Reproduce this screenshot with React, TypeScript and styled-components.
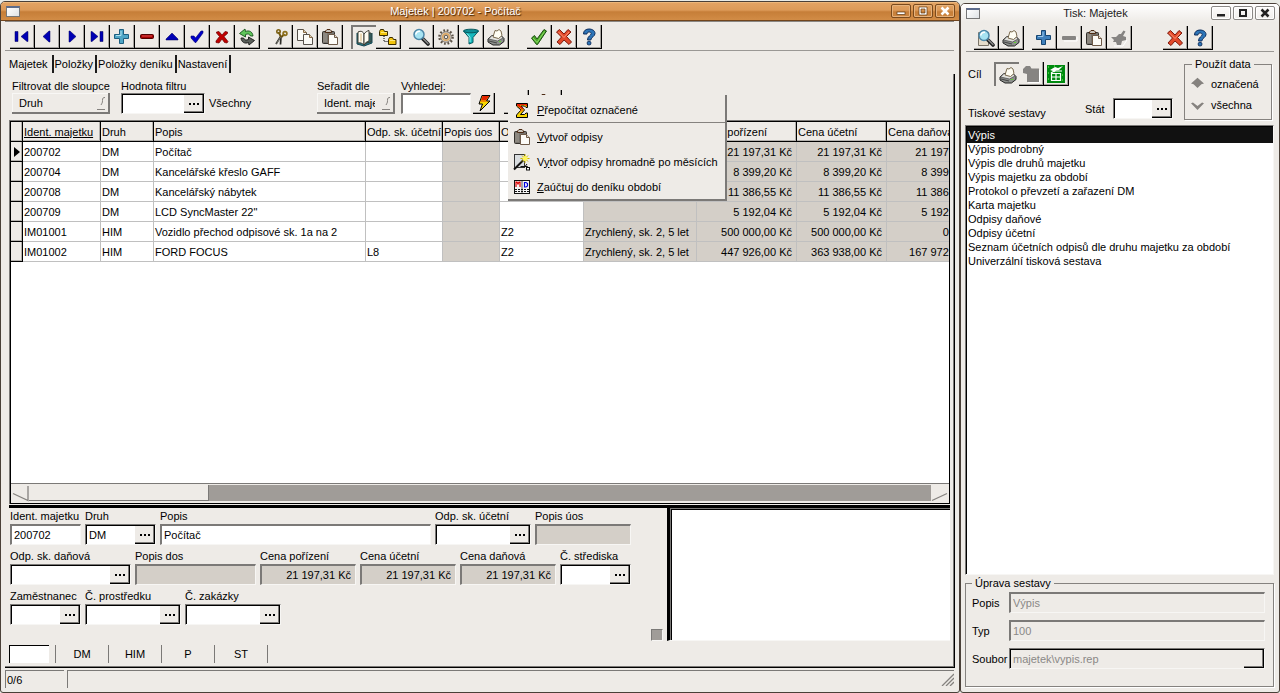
import React, { useState } from "react";
import styled, { createGlobalStyle, css } from "styled-components";

const face = "#eeebe7";
const shade = "#7b7977";
const readonlyBg = "#d4cfc8";
const gridLine = "#c0c0c0";

const GlobalStyle = createGlobalStyle`
  *, *::before, *::after { box-sizing: border-box; }
  body { margin: 0; background: #e9ebe6; }
  body, button, input, select, table {
    font-family: "Liberation Sans", Arial, sans-serif;
    font-size: 11px;
    line-height: 14px;
    color: #000;
  }
  button, input, select { margin: 0; padding: 0; border: 0; border-radius: 0; background: none; outline: none; }
  button { cursor: default; }
`;

/* ---------- icons ---------- */

type IconName =
  | "first" | "prev" | "next" | "last" | "plus" | "minus" | "up" | "check" | "cross" | "refresh"
  | "cut" | "copy" | "paste" | "book" | "tree" | "find" | "gear" | "filter" | "print" | "ok" | "cancel"
  | "help" | "bolt" | "sigma" | "wand" | "journal" | "preview" | "plusBlue" | "minusGrey" | "handGrey"
  | "folderGrey" | "sheet" | "doc";

const printer = (
  <>
    <path d="M1 11 5 7.500h9l3 3v3l-4.500 3.500H6L1 14z" fill="#8c8f8c" stroke="#222" />
    <path d="M1.500 11l9 2 5.500-3-2-2.500H5z" fill="#e2e2de" stroke="#444" strokeWidth=".7" />
    <path d="M6 9 8 2.500l2 .500 2-1.500 2 1.500 1 4.500-3.500 3z" fill="#fffef4" stroke="#6b5a3c" strokeWidth=".9" />
    <path d="M2 13l8 2" stroke="#444" />
    <rect x="12" y="13" width="2" height="1" fill="#5bd82a" />
  </>
);

const clipboard = (
  <>
    <rect x="1.500" y="3.500" width="12" height="12" rx="1" fill="#77736d" stroke="#33302c" />
    <path d="M3 5v9M5 5v9" stroke="#a39e95" />
    <path d="M4.500 4.500V3L6 1.500h3L10.500 3v1.500z" fill="#c9c5bd" stroke="#4d2b14" />
    <path d="M7.500 6.500h6l3 3v7h-9z" fill="#fdfcf8" stroke="#6e5a48" />
    <path d="M13.500 6.500v3h3" fill="#e8dccb" stroke="#6e5a48" />
  </>
);

const lens = (
  <>
    <path d="M10.500 10.500 16 16" stroke="#222" strokeWidth="3.600" strokeLinecap="round" />
    <path d="M11.500 11 16 15.500" stroke="#8d8d8d" strokeWidth="1.300" strokeLinecap="round" />
    <circle cx="7" cy="6.500" r="5" fill="#a7e3f2" stroke="#4c87a8" strokeWidth="1.500" />
    <path d="M3.800 6.500A3.500 3.500 0 0 1 8 3.300" fill="none" stroke="#fff" strokeWidth="1.600" />
  </>
);

const icons: Record<IconName, React.ReactNode> = {
  first: <path d="M2 3.500h3v10H2zM15 3.500v10h-1l-6-5 6-5z" fill="#0000b4" stroke="#000058" strokeWidth=".5" />,
  prev: <path d="M12 3v11h-1L5 8.500 11 3z" fill="#0000b4" stroke="#000058" strokeWidth=".5" />,
  next: <path d="M6 3v11h1l6-5.500L7 3z" fill="#0000b4" stroke="#000058" strokeWidth=".5" />,
  last: <path d="M3 3.500v10h1l6-5-6-5zM12 3.500h3v10h-3z" fill="#0000b4" stroke="#000058" strokeWidth=".5" />,
  plus: (
    <>
      <path d="M6.500 1.500h4v5h5v4h-5v5h-4v-5h-5v-4h5z" fill="#4fa6c6" stroke="#1d5f80" />
      <path d="M8 3v4.500H3" fill="none" stroke="#b2e2ee" />
    </>
  ),
  minus: (
    <>
      <rect x="2.500" y="6.500" width="13" height="4" rx="1" fill="#a40000" stroke="#500000" />
      <path d="M4 8h10" stroke="#e05050" />
    </>
  ),
  up: <path d="M9 5 15 11v1H3v-1z" fill="#0000b4" stroke="#000058" strokeWidth=".5" />,
  check: <path d="M3 8h3l1.500 2L13 3h2v2l-7 9.500H7L3 10z" fill="#0000c8" stroke="#000070" strokeWidth=".6" />,
  cross: <path d="M3.500 4 6 3.500l3 3.500 3-3.500 2.500.500v1.500L11 8.500l4 5-1 1.500-2.500-.500L9 11l-3 4-3-.500v-1.500l3.500-4.500-3-3.500z" fill="#c00000" stroke="#6b0000" strokeWidth=".7" />,
  refresh: (
    <>
      <path d="M15 8C14.500 3.500 11 2 7.500 3.500L7 1 1.500 5.500 7.500 9V6.500c2.500-1 4-.500 5 1.500z" fill="#5fc45a" stroke="#14501a" strokeWidth=".9" />
      <path d="M3 10C3.500 14.500 7 16 10.500 14.500l.500 2.500 5.500-4.500L10.500 9v2.500c-2.500 1-4 .500-5-1.500z" fill="#5a5f5a" stroke="#161616" strokeWidth=".9" />
    </>
  ),
  cut: (
    <>
      <path d="M10 8 5 16M10 8.500 9.500 16.500" stroke="#2f2f2a" strokeWidth="1.700" />
      <path d="M9.700 9 5.500 15.500" stroke="#b0b0a6" strokeWidth=".6" />
      <path d="M10 9 7.500 4M10.500 9l3-3" stroke="#6d5410" strokeWidth="1.800" />
      <circle cx="7.500" cy="3.500" r="1.700" fill="none" stroke="#7d6214" strokeWidth="1.600" />
      <circle cx="14" cy="5.500" r="1.900" fill="none" stroke="#8d701c" strokeWidth="1.700" />
    </>
  ),
  copy: (
    <>
      <path d="M1.500 1.500h6l3 3v8h-9z" fill="#fbfaf6" stroke="#55504a" />
      <path d="M7.500 1.500v3h3" fill="#e0cfae" stroke="#8a6a44" />
      <path d="M7.500 6.500h6l3 3v7h-9z" fill="#fbfaf6" stroke="#55504a" />
      <path d="M13.500 6.500v3h3" fill="#e0cfae" stroke="#8a6a44" />
    </>
  ),
  paste: clipboard,
  book: (
    <>
      <path d="M1 4v11l7 2 8-3V4" fill="#2b7a86" stroke="#134450" />
      <path d="M2 3c3-1.500 5-.500 6 2v11c-2-2-3.500-2.500-6-2z" fill="#fffdf2" stroke="#3c3a30" />
      <path d="M8 5c1.500-2 3-3 5-3.500V12c-2 .500-4 2-5 4z" fill="#fffdf2" stroke="#3c3a30" />
      <path d="M13 4h2v9c-3 0-5 1-7 3" fill="none" stroke="#3c3a30" />
      <path d="M5 4.500v8" stroke="#d8b478" />
    </>
  ),
  tree: (
    <>
      <path d="M5 8v5.500h4" fill="none" stroke="#000" strokeDasharray="1 1" />
      <path d="M.5 3.500l1-2h3l1 2h3v4h-8z" fill="#f2c40c" stroke="#3b2c00" />
      <path d="M9.500 11.500l1-2h3l1 2h2.500v5h-7.500z" fill="#f2c40c" stroke="#3b2c00" />
      <path d="M2 4.500h6M11 12.500h5" stroke="#ffe87a" />
    </>
  ),
  find: lens,
  gear: (
    <>
      <circle cx="9" cy="9" r="6.500" fill="none" stroke="#5b5146" strokeWidth="2.600" strokeDasharray="1.700 1.700" />
      <circle cx="9" cy="9" r="5.300" fill="#cfcac2" stroke="#8b8278" />
      <circle cx="9" cy="9" r="3.300" fill="none" stroke="#e0a860" strokeWidth="1.400" />
      <circle cx="9" cy="9" r="1.800" fill="#eeebe7" stroke="#5b5146" />
    </>
  ),
  filter: (
    <>
      <path d="M1.500 3 7 9.500V16l4-1.500v-5L16.500 3z" fill="#16b9bd" stroke="#075a60" />
      <ellipse cx="9" cy="3" rx="7.500" ry="1.800" fill="#0e8f96" stroke="#075a60" />
      <path d="M5 5.500 8 9v5" fill="none" stroke="#8ff2f2" />
    </>
  ),
  print: printer,
  ok: (
    <>
      <path d="M1.500 10 4.500 7.500 7 11 14 1.500l2.500 1.500L7.500 16.500h-1z" fill="#4aa52c" stroke="#1c4f10" />
      <path d="M3 10l4 4.500L14.500 3.500" fill="none" stroke="#8ede62" strokeWidth="1" />
    </>
  ),
  cancel: (
    <>
      <path d="M1.500 4 4.500 1.500 9 6l4-4.500L16 4l-4.500 4.500L16.500 14 14 16.500 9 12l-4 4.500L2 14l4.500-5z" fill="#e2492a" stroke="#7e1a0c" />
      <path d="M3.500 4 9 9.500 14 4" fill="none" stroke="#ff9474" strokeWidth="1" />
    </>
  ),
  help: (
    <>
      <path d="M3.500 6C3.500 2.500 6 1 9 1s6 1.500 6 4.500c0 3-4 3.500-4.200 6.500H7.500c0-4 3.700-4.500 3.700-6.500C11.200 4.500 10.200 4 9 4S7 4.800 7 6z" fill="#2d75b8" stroke="#0c2c5c" />
      <rect x="7.300" y="13.500" width="3.500" height="3.300" rx="1" fill="#2d75b8" stroke="#0c2c5c" />
    </>
  ),
  bolt: (
    <>
      <path d="M7 1.500h8L11.500 7H15L5 17l2.500-7H4z" fill="#f5d800" stroke="#000" />
      <path d="M7.500 2h6.700L11 6.500H6z" fill="#e32400" />
      <path d="M6 6.500h4.700L12.500 8H5z" fill="#f08a00" />
    </>
  ),
  sigma: (
    <>
      <path d="M3.500 2.500h11v4h-1.500L11.500 5H8l3.500 4-4 4.500h4L13 12h1.500v4.500h-11V14L8 9 3.500 5z" fill="#f7d400" stroke="#000" />
      <path d="M4 3h10v2.500L12 4H7l3.500 4H8.300L4 4.500z" fill="#e62000" />
      <path d="M8 8h2.800l-1.500 2.500H7z" fill="#f27a00" />
    </>
  ),
  wand: (
    <>
      <rect x="1.500" y="1.500" width="10" height="13" fill="#d9dde0" stroke="#333" />
      <path d="M1 16.500 10.500 7" stroke="#111" strokeWidth="2" />
      <path d="M12 1v9M7.500 5.500h9M9 2.500l6 6M15 2.500l-6 6" stroke="#c9b400" strokeWidth="1" />
      <circle cx="12" cy="5.500" r="2.500" fill="#fff45c" />
      <path d="M7.500 13.500h7v3M12 13.500l2-2.500" fill="none" stroke="#111" />
      <rect x="13.500" y="14.500" width="3" height="2.500" fill="#fff" stroke="#111" />
    </>
  ),
  journal: (
    <>
      <rect x="1.500" y="2.500" width="15" height="13" fill="#f6f6f6" stroke="#111" />
      <path d="M9 3v12" stroke="#555" />
      <path d="M3 9V4h1l1 2 1-2h1v5" fill="none" stroke="#e00000" strokeWidth="1.200" />
      <path d="M11.500 4.500h1.500l1.500 1v2.500l-1.500 1h-1.500z" fill="none" stroke="#0000e0" strokeWidth="1.200" />
      <path d="M2 11.500h14M2 13.500h14" stroke="#111" strokeDasharray="2 1" />
    </>
  ),
  preview: (
    <>
      <path d="M1.500 3.500h10v13h-10z" fill="#e5dccb" stroke="#7a7468" />
      <g>{lens}</g>
    </>
  ),
  plusBlue: (
    <>
      <path d="M6.500 1.500h4v5h5v4h-5v5h-4v-5h-5v-4h5z" fill="#3f80bc" stroke="#174672" />
      <path d="M8 3v4.500H3" fill="none" stroke="#9cc8ea" />
    </>
  ),
  minusGrey: (
    <>
      <path d="M4 12h13V8" fill="none" stroke="#fff" />
      <rect x="2" y="7" width="14" height="4" rx="1" fill="#868482" />
    </>
  ),
  handGrey: (
    <>
      <path d="M4 17h9l4-6" fill="none" stroke="#fff" />
      <path d="M1 8h5l3-3h2l2.500-3.500 2 1L13 7l3 1v3l-4 1-1 4H7l-1-3H3l1-2z" fill="#868482" />
    </>
  ),
  folderGrey: (
    <>
      <path d="M6 17.500h11.500V5" fill="none" stroke="#fff" />
      <path d="M1 4 4 1h4l1.500 2.500H17V17H5V9L1 8z" fill="#868482" />
    </>
  ),
  sheet: (
    <>
      <rect x="0" y="0" width="18" height="18" fill="#008a10" />
      <path d="M1 2h2M1 8h2M1 14h2M15 10h2M15 15h2M7 1h2" stroke="#7cff5a" strokeDasharray="1 1" />
      <path d="M3 5l5-3 3 1 5-2-4 4-3 .500-2 2-1-1.500z" fill="#fff" />
      <path d="M4.500 8.500h9v7h-9zM4.500 12h9M9 8.500v7M4 8l3-2h8" fill="none" stroke="#fff" strokeWidth="1.200" />
    </>
  ),
  doc: <path d="M3.500 7.500v9h11v-14h-7z" fill="#fff" stroke="#000" />,
};

const Glyph = styled.svg`
  display: block;
  width: 18px;
  height: 18px;
  flex: none;
`;

const Icon = ({ name }: { name: IconName }) => (
  <Glyph viewBox="0 0 18 18" aria-hidden="true">{icons[name]}</Glyph>
);

/* ---------- windows ---------- */

const Desktop = styled.div`
  display: flex;
  align-items: stretch;
  min-height: 100vh;
`;

const MainWindow = styled.main`
  flex: 1;
  min-width: 0;
  margin-top: 1px;
  display: flex;
  flex-direction: column;
  background: ${face};
  border: 1px solid #4a4038;
  border-radius: 5px 5px 3px 3px;
  overflow: hidden;
`;

const SideWindow = styled.aside`
  flex: none;
  width: 320px;
  margin-top: 3px;
  display: flex;
  flex-direction: column;
  background: ${face};
  border: 1px solid #4a4038;
  border-radius: 5px 5px 3px 3px;
  overflow: hidden;
`;

const TitleBar = styled.header<{ $active?: boolean }>`
  display: flex;
  align-items: center;
  flex: none;
  gap: 2px;
  ${(p) =>
    p.$active
      ? css`
          height: 19px;
          padding: 0 4px 0 5px;
          background: linear-gradient(#f3c287 0, #e2a262 8%, #dc9a58 45%, #c67e38 55%, #d28c46 100%);
          border-bottom: 1px solid #70441c;
          color: #fff;
          text-shadow: 1px 1px 1px #3a1c00;
        `
      : css`
          height: 18px;
          padding: 0 4px 0 5px;
          background: linear-gradient(#fff, ${face});
          color: #222;
        `}
`;

const WindowIcon = styled.span`
  width: 14px;
  height: 11px;
  flex: none;
  border: 1px solid #777;
  border-top: 2px solid #5c6c8c;
  background: linear-gradient(135deg, #fff, #dfe3e6);
`;

const WindowTitle = styled.h1`
  flex: 1;
  margin: 0;
  font-size: 11px;
  font-weight: 400;
  text-align: center;
`;

const TitleButton = styled.button<{ $active?: boolean }>`
  width: 20px;
  height: 14px;
  display: flex;
  align-items: center;
  justify-content: center;
  border: 1px solid ${(p) => (p.$active ? "#7a4a1c" : "#8a8885")};
  border-radius: 2px;
  color: ${(p) => (p.$active ? "#fff" : "#222")};
  box-shadow: inset 0 0 0 1px ${(p) => (p.$active ? "#e6b27c" : "#fff")};
  svg { width: 12px; height: 10px; display: block; }
`;

const TitleButtons = ({ active }: { active?: boolean }) => {
  const outline = active ? "#5a3410" : "none";
  return (
    <>
      <TitleButton $active={active} aria-label="Minimalizovat">
        <svg viewBox="0 0 12 10"><rect x="2" y="6" width="8" height="2.500" fill="currentColor" stroke={outline} strokeWidth=".7" /></svg>
      </TitleButton>
      <TitleButton $active={active} aria-label="Maximalizovat">
        <svg viewBox="0 0 12 10"><path d="M2 1h8v8H2zM4 3v4h4V3z" fillRule="evenodd" fill="currentColor" stroke={outline} strokeWidth=".7" /></svg>
      </TitleButton>
      <TitleButton $active={active} aria-label="Zavřít">
        <svg viewBox="0 0 12 10"><path d="M2.500 1.500l7 7M9.500 1.500l-7 7" stroke="currentColor" strokeWidth="2.500" /></svg>
      </TitleButton>
    </>
  );
};

/* ---------- tool bars ---------- */

const ToolBar = styled.div<{ $inner?: boolean }>`
  display: flex;
  gap: 8px;
  flex: none;
  margin: 0 5px 0 4px;
  padding: 3px 0 1px 5px;
  border-top: 1px solid #8a8784;
  border-bottom: 1px solid #9a9895;
  ${(p) =>
    p.$inner &&
    css`
      margin: 0 5px;
      padding: 3px 0 1px 8px;
      border-top-color: transparent;
    `}
`;

const ToolGroup = styled.div<{ $apart?: string }>`
  display: flex;
  margin-left: ${(p) => p.$apart || "0"};
`;

const ToolButton = styled.button<{ $pressed?: boolean; $wide?: boolean }>`
  width: ${(p) => (p.$wide ? "33px" : "25px")};
  height: 24px;
  display: flex;
  align-items: center;
  justify-content: center;
  flex: none;
  ${(p) =>
    p.$pressed
      ? css`
          border-top: 2px solid ${shade};
          border-left: 2px solid ${shade};
        `
      : css`
          border-right: 1px solid #000;
          border-bottom: 1px solid #000;
          box-shadow: inset -1px -1px #a5a29e;
        `}
`;

/* ---------- fields ---------- */

const Label = styled.label`
  display: block;
  white-space: nowrap;
`;

const FieldBox = styled.div<{ $w?: number }>`
  flex: none;
  width: ${(p) => (p.$w ? `${p.$w}px` : "auto")};
`;

const TextInput = styled.input<{ $readonly?: boolean; $right?: boolean; $muted?: boolean }>`
  display: block;
  width: 100%;
  height: 21px;
  padding: 0 4px 0 2px;
  border: 1px solid #f7f6f4;
  border-top: 2px solid ${shade};
  border-left: 2px solid ${shade};
  background: ${(p) => (p.$readonly ? readonlyBg : p.$muted ? face : "#fff")};
  color: ${(p) => (p.$muted ? "#8a8886" : "#000")};
  text-align: ${(p) => (p.$right ? "right" : "left")};
`;

const ComboFrame = styled.div<{ $w?: number }>`
  display: flex;
  flex: ${(p) => (p.$w ? "none" : "1")};
  width: ${(p) => (p.$w ? `${p.$w}px` : "auto")};
  height: 21px;
  border: 1px solid #f7f6f4;
  border-top-color: ${shade};
  border-left-color: ${shade};
`;

const ComboInput = styled.input<{ $muted?: boolean }>`
  flex: 1;
  min-width: 0;
  padding: 0 2px;
  border-top: 1px solid #000;
  border-left: 1px solid #000;
  background: ${(p) => (p.$muted ? face : "#fff")};
  color: ${(p) => (p.$muted ? "#8a8886" : "#000")};
`;

const ComboButton = styled.button`
  width: 20px;
  flex: none;
  display: flex;
  align-items: center;
  justify-content: center;
  background: ${face};
  border-top: 1px solid #000;
  border-right: 1px solid #000;
  border-bottom: 1px solid #000;
  box-shadow: inset -1px -1px ${shade};
  svg { width: 12px; height: 4px; display: block; }
`;

type ComboProps = { id: string; value?: string; width?: number; muted?: boolean; dots?: boolean; label?: string };

const Combo = ({ id, value = "", width, muted, dots = true, label }: ComboProps) => (
  <ComboFrame $w={width}>
    <ComboInput id={id} defaultValue={value} $muted={muted} aria-label={label} />
    <ComboButton aria-label="Vybrat">
      {dots && (
        <svg viewBox="0 0 12 4"><path d="M1 1h2v2H1zM5 1h2v2H5zM9 1h2v2H9z" /></svg>
      )}
    </ComboButton>
  </ComboFrame>
);

type FieldDef = {
  id: string;
  label: string;
  w: number;
  value?: string;
  kind?: "combo" | "readonly";
  right?: boolean;
};

const FieldLabel = styled(Label)`
  margin-bottom: 1px;
`;

const Field = ({ id, label, w, value = "", kind, right }: FieldDef) => (
  <FieldBox $w={w}>
    <FieldLabel htmlFor={id}>{label}</FieldLabel>
    {kind === "combo" ? (
      <Combo id={id} value={value} width={w} />
    ) : (
      <TextInput id={id} defaultValue={value} readOnly={kind === "readonly"} $readonly={kind === "readonly"} $right={right} />
    )}
  </FieldBox>
);

/* ---------- tabs and filter ---------- */

const Tabs = styled.div`
  display: flex;
  flex: none;
  padding: 4px 0 1px 4px;
`;

const Tab = styled.button<{ $on?: boolean }>`
  height: 18px;
  padding: ${(p) => (p.$on ? "0 4px" : "0 2px 0 1px")};
  border-right: 2px solid #1c1c1c;
  white-space: nowrap;
`;

const Page = styled.section`
  flex: 1;
  min-height: 0;
  display: flex;
  flex-direction: column;
  margin: 0 4px;
  padding: 5px 4px 4px;
  border-right: 1px solid #000;
  border-bottom: 1px solid #000;
  box-shadow: inset -1px -1px ${shade};
`;

const FilterBar = styled.div`
  position: relative;
  display: flex;
  align-items: flex-end;
  flex: none;
  padding: 0 0 6px 3px;
`;

const FilterItem = styled.div<{ $w: number; $gap?: number }>`
  width: ${(p) => p.$w}px;
  margin-right: ${(p) => p.$gap || 0}px;
  flex: none;
`;

const FilterNote = styled.span`
  width: 108px;
  line-height: 21px;
`;

const Picker = styled.div`
  position: relative;
  svg {
    position: absolute;
    right: 4px;
    top: 4px;
    width: 9px;
    height: 14px;
    pointer-events: none;
  }
`;

const PickerSelect = styled.select`
  display: block;
  appearance: none;
  width: 100%;
  height: 21px;
  padding: 0 18px 0 7px;
  border-right: 2px solid ${shade};
  border-bottom: 2px solid ${shade};
  box-shadow: inset 1px 1px #f8f7f5;
`;

const SelectPicker = ({ id, value }: { id: string; value: string }) => (
  <Picker>
    <PickerSelect id={id} defaultValue={value}>
      <option>{value}</option>
    </PickerSelect>
    <svg viewBox="0 0 9 14"><path d="M8 .5C6 .5 5.500 1 5.500 3.500S5 6 4 8M0 12.500h8" fill="none" stroke="#85827f" /></svg>
  </Picker>
);

const SmallButton = styled(ToolButton)`
  width: 22px;
  height: 21px;
  margin-right: 9px;
`;

const PopupMenu = styled.div`
  position: absolute;
  left: 499px;
  top: 16px;
  z-index: 2;
  width: 219px;
  padding: 2px 0 0 2px;
  background: ${face};
  border-right: 2px solid ${shade};
  border-bottom: 2px solid ${shade};
`;

const MenuItem = styled.button`
  display: flex;
  align-items: center;
  gap: 6px;
  width: 100%;
  height: 25px;
  padding-left: 3px;
  white-space: nowrap;
  text-align: left;
`;

const MenuLine = styled.div`
  height: 1px;
  margin-bottom: 1px;
  background: #85827f;
`;

/* ---------- data grid ---------- */

const GridFrame = styled.div`
  flex: 1;
  min-height: 0;
  display: flex;
  border-top: 1px solid ${shade};
  border-left: 1px solid ${shade};
`;

const GridBody = styled.div`
  flex: 1;
  min-width: 0;
  display: flex;
  flex-direction: column;
  justify-content: space-between;
  overflow: hidden;
  background: #fff;
  border: 1px solid #000;
`;

const DataTable = styled.table`
  table-layout: fixed;
  width: 974px;
  border-collapse: separate;
  border-spacing: 0;
`;

const HeadCell = styled.th<{ $sorted?: boolean }>`
  height: 20px;
  padding: 0 0 0 1px;
  font-weight: 400;
  text-align: left;
  white-space: nowrap;
  overflow: hidden;
  background: ${face};
  border-right: 1px solid #000;
  border-bottom: 1px solid #000;
  box-shadow: inset -1px -1px #b4b1ad;
  text-decoration: ${(p) => (p.$sorted ? "underline" : "none")};
`;

const Cell = styled.td<{ $shaded?: boolean; $right?: boolean }>`
  height: 20px;
  padding: 0 4px 0 1px;
  white-space: nowrap;
  overflow: hidden;
  border-right: 1px solid ${gridLine};
  border-bottom: 1px solid ${gridLine};
  background: ${(p) => (p.$shaded ? readonlyBg : "#fff")};
  text-align: ${(p) => (p.$right ? "right" : "left")};
`;

const MarkCell = styled.td`
  height: 20px;
  padding: 0 0 0 3px;
  background: ${face};
  border-right: 1px solid #000;
  border-bottom: 1px solid #000;
  box-shadow: inset -1px -1px #b4b1ad;
  svg { display: block; width: 6px; height: 10px; }
`;

const ScrollBar = styled.div`
  display: flex;
  flex: none;
  height: 20px;
  padding: 1px 0 2px;
  background: ${face};
  border-top: 1px solid ${shade};
`;

const ScrollArrow = styled.button`
  width: 18px;
  flex: none;
  svg { display: block; width: 18px; height: 17px; }
`;

const ScrollTrack = styled.div`
  flex: 1;
  background: #a09c98;
`;

const ScrollThumb = styled.div`
  width: 20%;
  height: 100%;
  background: ${face};
  border-right: 1px solid ${shade};
  border-bottom: 1px solid ${shade};
`;

/* ---------- record form ---------- */

const Splitter = styled.div`
  flex: none;
  height: 3px;
  margin-top: 1px;
  background: #000;
`;

const Detail = styled.div`
  flex: none;
  display: flex;
  height: 133px;
`;

const RecordForm = styled.form`
  flex: 1;
  min-width: 0;
  display: flex;
  flex-direction: column;
  padding: 1px 4px 0 1px;
`;

const FormRow = styled.div`
  display: flex;
  gap: 4px;
  margin-bottom: 4px;
`;

const CornerBox = styled.span`
  align-self: flex-end;
  width: 12px;
  height: 12px;
  background: #a09c98;
  border: 1px solid #f7f6f4;
  border-top: 1px solid ${shade};
  border-left: 1px solid ${shade};
`;

const NotePanel = styled.div`
  width: 283px;
  flex: none;
  background: #fff;
  border-left: 3px solid #000;
  border-bottom: 1px solid #f7f6f4;
  box-shadow: inset 1px 1px ${shade}, inset 2px 2px #000;
`;

const KindBar = styled.div`
  display: flex;
  flex: none;
  gap: 6px;
  margin-top: 4px;
  height: 18px;
`;

const KindInput = styled.input`
  width: 40px;
  background: #fff;
  border-top: 1px solid #000;
  border-left: 1px solid #000;
`;

const KindList = styled.div`
  display: flex;
  border-right: 1px solid ${shade};
`;

const KindButton = styled.button`
  width: 53px;
  border-left: 1px solid ${shade};
`;

const StatusBar = styled.footer`
  display: flex;
  flex: none;
  gap: 3px;
  height: 22px;
  margin: 2px 5px 0 4px;
  padding-bottom: 4px;
`;

const StatusCell = styled.div<{ $w?: number }>`
  display: flex;
  align-items: center;
  justify-content: ${(p) => (p.$w ? "flex-start" : "flex-end")};
  flex: ${(p) => (p.$w ? "none" : "1")};
  width: ${(p) => (p.$w ? `${p.$w}px` : "auto")};
  padding-left: 1px;
  border-top: 1px solid ${shade};
  border-left: 1px solid ${shade};
  svg { width: 13px; height: 13px; display: block; }
`;

/* ---------- print window ---------- */

const PrintOptions = styled.div`
  flex: none;
  display: flex;
  justify-content: space-between;
  gap: 11px;
  padding: 5px 7px;
`;

const OptionColumn = styled.div`
  flex: 1;
  display: flex;
  flex-direction: column;
  justify-content: space-between;
  padding-top: 5px;
`;

const OptionRow = styled.div`
  display: flex;
  align-items: center;
`;

const TargetName = styled.span`
  width: 26px;
`;

const ListTitle = styled.h2`
  flex: 1;
  margin: 0;
  padding-top: 9px;
  font-size: 11px;
  font-weight: 400;
`;

const StateLabel = styled.label`
  width: 28px;
`;

const Group = styled.fieldset<{ $fill?: boolean }>`
  min-width: 0;
  margin: ${(p) => (p.$fill ? "0 5px 5px 4px" : "0")};
  width: ${(p) => (p.$fill ? "auto" : "88px")};
  padding: ${(p) => (p.$fill ? "2px 8px 10px 6px" : "2px 0 4px 6px")};
  border: 1px solid #85827f;
  box-shadow: 1px 1px #fff;
  legend { padding: 0 3px; margin-left: ${(p) => (p.$fill ? "0" : "1px")}; }
`;

const RadioRow = styled.label`
  display: flex;
  align-items: center;
  gap: 7px;
  height: 21px;
`;

const Radio = styled.input`
  appearance: none;
  width: 13px;
  height: 13px;
  flex: none;
  background: #85827f;
  clip-path: polygon(0 40%, 15% 35%, 50% 62%, 85% 35%, 100% 40%, 50% 92%);
  &:checked { clip-path: polygon(50% 5%, 100% 50%, 80% 55%, 50% 85%, 20% 55%, 0 50%); }
`;

const ReportList = styled.select`
  flex: 1;
  display: block;
  min-height: 0;
  margin: 0 5px 1px 4px;
  overflow: hidden;
  background: #fff;
  border: 1px solid #f7f6f4;
  border-top-color: ${shade};
  border-left-color: ${shade};
  box-shadow: inset 1px 1px #000;
  padding: 3px 0 0 1px;
  option {
    height: 14px;
    min-height: 14px;
    padding: 0 0 0 1px;
    font-size: 11px;
    color: #000;
  }
  option:checked {
    background: #111 linear-gradient(#111, #111);
    box-shadow: 0 -2px #111;
    color: #fff;
    -webkit-text-fill-color: #fff;
  }
`;

const ReportRow = styled.div`
  display: grid;
  grid-template-columns: 37px 1fr;
  align-items: center;
  margin-bottom: 7px;
`;

/* ---------- data ---------- */

const reports = [
  "Výpis",
  "Výpis podrobný",
  "Výpis dle druhů majetku",
  "Výpis majetku za období",
  "Protokol o převzetí a zařazení DM",
  "Karta majetku",
  "Odpisy daňové",
  "Odpisy účetní",
  "Seznam účetních odpisů dle druhu majetku za období",
  "Univerzální tisková sestava",
];

const columns = [
  { title: "Ident. majetku", w: 78 },
  { title: "Druh", w: 53 },
  { title: "Popis", w: 212 },
  { title: "Odp. sk. účetní", w: 77 },
  { title: "Popis úos", w: 57, shaded: true },
  { title: "Odp. sk. daňová", w: 84 },
  { title: "Popis dos", w: 113, shaded: true },
  { title: "Cena pořízení", w: 100, shaded: true, right: true },
  { title: "Cena účetní", w: 90, shaded: true, right: true },
  { title: "Cena daňová", w: 98, shaded: true, right: true },
];

const rows = [
  ["200702", "DM", "Počítač", "", "", "", "", "21 197,31 Kč", "21 197,31 Kč", "21 197,31 Kč"],
  ["200704", "DM", "Kancelářské křeslo GAFF", "", "", "", "", "8 399,20 Kč", "8 399,20 Kč", "8 399,20 Kč"],
  ["200708", "DM", "Kancelářský nábytek", "", "", "", "", "11 386,55 Kč", "11 386,55 Kč", "11 386,55 Kč"],
  ["200709", "DM", "LCD SyncMaster 22\"", "", "", "", "", "5 192,04 Kč", "5 192,04 Kč", "5 192,04 Kč"],
  ["IM01001", "HIM", "Vozidlo přechod odpisové sk. 1a na 2", "", "", "Z2", "Zrychlený, sk. 2, 5 let", "500 000,00 Kč", "500 000,00 Kč", "0,00 Kč"],
  ["IM01002", "HIM", "FORD FOCUS", "L8", "", "Z2", "Zrychlený, sk. 2, 5 let", "447 926,00 Kč", "363 938,00 Kč", "167 972,00 Kč"],
];

const formRows: FieldDef[][] = [
  [
    { id: "ident", label: "Ident. majetku", w: 71, value: "200702" },
    { id: "druh", label: "Druh", w: 71, value: "DM", kind: "combo" },
    { id: "popis", label: "Popis", w: 271, value: "Počítač" },
    { id: "skUcetni", label: "Odp. sk. účetní", w: 96, kind: "combo" },
    { id: "uos", label: "Popis úos", w: 96, kind: "readonly" },
  ],
  [
    { id: "skDanova", label: "Odp. sk. daňová", w: 121, kind: "combo" },
    { id: "dos", label: "Popis dos", w: 121, kind: "readonly" },
    { id: "porizeni", label: "Cena pořízení", w: 96, value: "21 197,31 Kč", kind: "readonly", right: true },
    { id: "ucetni", label: "Cena účetní", w: 96, value: "21 197,31 Kč", kind: "readonly", right: true },
    { id: "danova", label: "Cena daňová", w: 96, value: "21 197,31 Kč", kind: "readonly", right: true },
    { id: "stredisko", label: "Č. střediska", w: 71, kind: "combo" },
  ],
  [
    { id: "zamestnanec", label: "Zaměstnanec", w: 71, kind: "combo" },
    { id: "prostredek", label: "Č. prostředku", w: 96, kind: "combo" },
    { id: "zakazka", label: "Č. zakázky", w: 96, kind: "combo" },
  ],
];

type Tool = [IconName, string];

const mainTools: { apart?: string; items: Tool[] }[] = [
  {
    items: [
      ["first", "První"], ["prev", "Předchozí"], ["next", "Další"], ["last", "Poslední"], ["plus", "Přidat"],
      ["minus", "Odebrat"], ["up", "Upravit"], ["check", "Uložit"], ["cross", "Zrušit"], ["refresh", "Obnovit"],
    ],
  },
  { items: [["cut", "Vyjmout"], ["copy", "Kopírovat"], ["paste", "Vložit"]] },
  { items: [["book", "Kniha"], ["tree", "Strom"]] },
  { items: [["find", "Hledat"], ["gear", "Nastavit"], ["filter", "Filtr"], ["print", "Tisk"]] },
  { apart: "10px", items: [["ok", "Potvrdit"], ["cancel", "Storno"], ["help", "Nápověda"]] },
];

const printTools: { apart?: string; items: Tool[] }[] = [
  { items: [["preview", "Náhled"], ["print", "Tisk"]] },
  { items: [["plusBlue", "Přidat"], ["minusGrey", "Odebrat"], ["paste", "Vložit"], ["handGrey", "Vybrat"]] },
  { apart: "23px", items: [["cancel", "Zavřít"], ["help", "Nápověda"]] },
];

const Tools = ({ groups }: { groups: typeof mainTools }) => (
  <>
    {groups.map((group, i) => (
      <ToolGroup key={i} $apart={group.apart}>
        {group.items.map(([icon, label]) => (
          <ToolButton key={icon} aria-label={label} $pressed={icon === "book"}>
            <Icon name={icon} />
          </ToolButton>
        ))}
      </ToolGroup>
    ))}
  </>
);

export default function App() {
  const [tab, setTab] = useState("Majetek");

  return (
    <>
      <GlobalStyle />
      <Desktop>
        <MainWindow>
          <TitleBar $active>
            <WindowIcon />
            <WindowTitle>Majetek | 200702 - Počítač</WindowTitle>
            <TitleButtons active />
          </TitleBar>
          <ToolBar>
            <Tools groups={mainTools} />
          </ToolBar>
          <Tabs role="tablist">
            {["Majetek", "Položky", "Položky deníku", "Nastavení"].map((t) => (
              <Tab key={t} role="tab" aria-selected={t === tab} $on={t === tab} onClick={() => setTab(t)}>{t}</Tab>
            ))}
          </Tabs>
          <Page>
            <FilterBar>
              <FilterItem $w={98} $gap={11}>
                <Label htmlFor="filterColumn">Filtrovat dle sloupce</Label>
                <SelectPicker id="filterColumn" value="Druh" />
              </FilterItem>
              <FilterItem $w={84} $gap={4}>
                <Label htmlFor="filterValue">Hodnota filtru</Label>
                <Combo id="filterValue" width={84} />
              </FilterItem>
              <FilterNote>Všechny</FilterNote>
              <FilterItem $w={78} $gap={6}>
                <Label htmlFor="sortBy">Seřadit dle</Label>
                <SelectPicker id="sortBy" value="Ident. majetku" />
              </FilterItem>
              <FilterItem $w={70} $gap={2}>
                <Label htmlFor="search">Vyhledej:</Label>
                <TextInput id="search" />
              </FilterItem>
              <SmallButton aria-label="Spustit"><Icon name="bolt" /></SmallButton>
              <ToolButton aria-label="Dokument"><Icon name="doc" /></ToolButton>
              <ToolButton aria-label="Operace" $wide><Icon name="paste" /></ToolButton>
              <PopupMenu role="menu">
                <MenuItem role="menuitem"><Icon name="sigma" /><span><u>P</u>řepočítat označené</span></MenuItem>
                <MenuLine />
                <MenuItem role="menuitem"><Icon name="paste" /><span><u>V</u>ytvoř odpisy</span></MenuItem>
                <MenuItem role="menuitem"><Icon name="wand" /><span>V<u>y</u>tvoř odpisy hromadně po měsících</span></MenuItem>
                <MenuItem role="menuitem"><Icon name="journal" /><span><u>Z</u>aúčtuj do deníku období</span></MenuItem>
              </PopupMenu>
            </FilterBar>

            <GridFrame>
              <GridBody>
                <DataTable>
                  <colgroup>
                    <col width={12} />
                    {columns.map((c) => <col key={c.title} width={c.w} />)}
                  </colgroup>
                  <thead>
                    <tr>
                      <HeadCell />
                      {columns.map((c, i) => <HeadCell key={c.title} $sorted={i === 0}>{c.title}</HeadCell>)}
                    </tr>
                  </thead>
                  <tbody>
                    {rows.map((row, r) => (
                      <tr key={row[0]}>
                        <MarkCell>{r === 0 && <svg viewBox="0 0 6 10"><path d="M0 0l6 5-6 5z" /></svg>}</MarkCell>
                        {row.map((value, i) => (
                          <Cell key={i} $shaded={columns[i].shaded} $right={columns[i].right}>{value}</Cell>
                        ))}
                      </tr>
                    ))}
                  </tbody>
                </DataTable>
                <ScrollBar>
                  <ScrollArrow aria-label="Posunout vlevo">
                    <svg viewBox="0 0 18 17"><path d="M2 8.500l15 7V1" fill="none" stroke="#85827f" strokeWidth="1.300" /></svg>
                  </ScrollArrow>
                  <ScrollTrack><ScrollThumb /></ScrollTrack>
                  <ScrollArrow aria-label="Posunout vpravo">
                    <svg viewBox="0 0 18 17"><path d="M1 15.500 16 8.500" fill="none" stroke="#85827f" strokeWidth="1.300" /></svg>
                  </ScrollArrow>
                </ScrollBar>
              </GridBody>
            </GridFrame>

            <Splitter />
            <Detail>
              <RecordForm>
                {formRows.map((fields, i) => (
                  <FormRow key={i}>
                    {fields.map((f) => <Field key={f.id} {...f} />)}
                  </FormRow>
                ))}
                <CornerBox />
              </RecordForm>
              <NotePanel />
            </Detail>
            <KindBar>
              <KindInput aria-label="Druh majetku" />
              <KindList>
                {["DM", "HIM", "P", "ST"].map((k) => <KindButton key={k}>{k}</KindButton>)}
              </KindList>
            </KindBar>
          </Page>
          <StatusBar>
            <StatusCell $w={59}>0/6</StatusCell>
            <StatusCell>
              <svg viewBox="0 0 13 13"><path d="M1 13 13 1M5 13l8-8M9 13l4-4" stroke="#85827f" strokeWidth="1.300" /></svg>
            </StatusCell>
          </StatusBar>
        </MainWindow>

        <SideWindow>
          <TitleBar>
            <WindowIcon />
            <WindowTitle>Tisk: Majetek</WindowTitle>
            <TitleButtons />
          </TitleBar>
          <ToolBar $inner>
            <Tools groups={printTools} />
          </ToolBar>
          <PrintOptions>
            <OptionColumn>
              <OptionRow>
                <TargetName>Cíl</TargetName>
                <ToolButton aria-label="Tiskárna" $pressed><Icon name="print" /></ToolButton>
                <ToolButton aria-label="Soubor"><Icon name="folderGrey" /></ToolButton>
                <ToolButton aria-label="Tabulka"><Icon name="sheet" /></ToolButton>
              </OptionRow>
              <OptionRow>
                <ListTitle>Tiskové sestavy</ListTitle>
                <StateLabel htmlFor="state">Stát</StateLabel>
                <Combo id="state" width={60} />
              </OptionRow>
            </OptionColumn>
            <Group>
              <legend>Použít data</legend>
              <RadioRow><Radio type="radio" name="scope" defaultChecked />označená</RadioRow>
              <RadioRow><Radio type="radio" name="scope" />všechna</RadioRow>
            </Group>
          </PrintOptions>
          <ReportList size={10} defaultValue="Výpis" aria-label="Tiskové sestavy">
            {reports.map((r) => <option key={r}>{r}</option>)}
          </ReportList>
          <Group $fill>
            <legend>Úprava sestavy</legend>
            <ReportRow>
              <Label htmlFor="repName">Popis</Label>
              <TextInput id="repName" defaultValue="Výpis" readOnly $muted />
            </ReportRow>
            <ReportRow>
              <Label htmlFor="repType">Typ</Label>
              <TextInput id="repType" defaultValue="100" readOnly $muted />
            </ReportRow>
            <ReportRow>
              <Label htmlFor="repFile">Soubor</Label>
              <Combo id="repFile" value={"majetek\\vypis.rep"} muted dots={false} />
            </ReportRow>
          </Group>
        </SideWindow>
      </Desktop>
    </>
  );
}
